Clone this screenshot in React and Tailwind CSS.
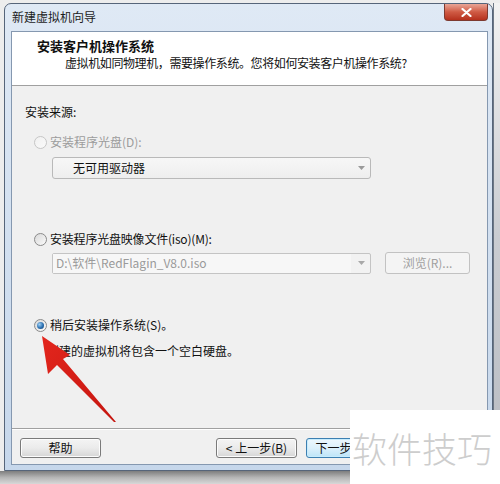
import React from "react";

function Radio({ checked = false, disabled = false }) {
  return (
    <span
      className={
        "relative inline-flex h-[13px] w-[13px] shrink-0 items-center justify-center rounded-full border " +
        (disabled
          ? "border-[#c6c6c6] bg-gradient-to-br from-[#f0f0f0] to-[#fafafa]"
          : "border-[#8a8a8a] bg-gradient-to-br from-[#d9d9d9] to-[#fbfbfb]")
      }
    >
      {checked && (
        <span className="h-[7px] w-[7px] rounded-full bg-[radial-gradient(circle_at_35%_35%,#9fd0f5,#2a6fb0_55%,#0f3e70)]" />
      )}
    </span>
  );
}

function Caret({ color = "#9a9a9a" }) {
  return (
    <svg width="7" height="4" viewBox="0 0 7 4" className="shrink-0">
      <path d="M0 0 H7 L3.5 4 Z" fill={color} />
    </svg>
  );
}

function Button({ children, primary = false }) {
  return (
    <div
      className={
        "flex h-[20px] w-[81px] items-center justify-center rounded-[3px] border text-[12px] leading-none text-[#111] " +
        (primary
          ? "border-[#3c7fb1] bg-gradient-to-b from-[#edf7fd] via-[#dcf0fb] to-[#bde4f8] shadow-[inset_0_0_0_1px_#c7ecfd]"
          : "border-[#7a7a7a] bg-gradient-to-b from-[#f4f4f4] via-[#ebebeb] to-[#d6d6d6] shadow-[inset_0_0_0_1px_#fcfcfc]")
      }
    >
      {children}
    </div>
  );
}

function Arrow() {
  return (
    <svg className="pointer-events-none absolute left-0 top-0" width="500" height="484" viewBox="0 0 500 484">
      <defs>
        <linearGradient id="ar" x1="0" y1="0" x2="1" y2="1">
          <stop offset="0" stopColor="#e3261d" />
          <stop offset="1" stopColor="#c5150f" />
        </linearGradient>
      </defs>
      <polygon
        points="42,336 70,355 63,359 116,422 114,422 57,365 48,374"
        fill="url(#ar)"
      />
    </svg>
  );
}

export default function App() {
  return (
    <div className="relative h-[484px] w-[500px] overflow-hidden bg-[#ededed] font-['Noto_Sans_CJK_SC','Liberation_Sans',sans-serif] text-[12px] text-[#111]">
      <div className="flex h-[471px] pl-[4px] pt-[3px]">
        {/* window */}
        <div className="flex w-[489px] flex-col rounded-t-[7px] border border-[#56657a] bg-gradient-to-b from-[#dfe9f5] to-[#c6d7eb]">
          <div className="flex h-[27px] items-start justify-between pl-[7px]">
            <span className="mt-[5px] leading-[16px] text-[#1c1c1c]">新建虚拟机向导</span>
            <div className="mr-[4px] flex h-[17px] w-[44px] items-center justify-center rounded-b-[4px] border border-t-0 border-[#7d3a30] bg-gradient-to-b from-[#e8a596] via-[#cf5a44] to-[#b5301c]">
              <svg width="11" height="9" viewBox="0 0 11 9">
                <path d="M1.5 1 L9.5 8 M9.5 1 L1.5 8" stroke="#fff" strokeWidth="2.2" strokeLinecap="round" />
              </svg>
            </div>
          </div>

          {/* client area */}
          <div className="ml-[6px] mr-[4px] flex h-[434px] flex-col border border-[#8598b0] bg-[#f0f0f0]">
            <div className="h-[54px] border-b border-[#a0a0a0] bg-white pt-[6px]">
              <div className="pl-[25px] text-[13px] font-bold leading-[16px]">安装客户机操作系统</div>
              <div className="mt-[1px] pl-[53px] leading-[16px] tracking-[-0.4px]">虚拟机如同物理机，需要操作系统。您将如何安装客户机操作系统?</div>
            </div>

            <div className="flex h-[343px] flex-col border-b border-[#a0a0a0] pl-[13px]">
              <div className="mt-[18px] leading-[16px]">安装来源:</div>

              <div className="ml-[9px] mt-[14px] flex h-[16px] items-center gap-[3px] text-[#9c9c9c]">
                <Radio disabled />
                <span className="leading-[16px]">安装程序光盘(D):</span>
              </div>
              <div className="ml-[27px] mt-[7px] flex h-[22px] w-[319px] items-center justify-between rounded-[3px] border border-[#b9b9b9] bg-gradient-to-b from-[#f7f7f7] to-[#eeeeee] pl-[20px] pr-[5px]">
                <span className="leading-[16px]">无可用驱动器</span>
                <Caret />
              </div>

              <div className="ml-[9px] mt-[52px] flex h-[16px] items-center gap-[3px]">
                <Radio />
                <span className="leading-[16px] tracking-[-0.2px]">安装程序光盘映像文件(iso)(M):</span>
              </div>
              <div className="ml-[27px] mt-[5px] flex h-[22px] items-center gap-[14px]">
                <div className="flex h-[21px] w-[319px] items-center justify-between rounded-[2px] border border-[#c4c4c4] bg-[#f2f2f2] pr-[5px]">
                  <span className="flex h-full w-[298px] items-center bg-[#f7f7f7] pl-[3px] leading-[16px] text-[#9a9a9a]">
                    {"D:\\软件\\RedFlagin_V8.0.iso"}
                  </span>
                  <Caret color="#a8a8a8" />
                </div>
                <div className="flex h-[22px] w-[85px] items-center justify-center rounded-[3px] border border-[#c2c2c2] bg-[#f4f4f4] text-[#a0a0a0]">
                  浏览(R)...
                </div>
              </div>

              <div className="ml-[9px] mt-[43px] flex h-[16px] items-center gap-[3px]">
                <Radio checked />
                <span className="leading-[16px]">稍后安装操作系统(S)。</span>
              </div>
              <div className="ml-[22px] mt-[10px] leading-[16px]">创建的虚拟机将包含一个空白硬盘。</div>
            </div>

            <div className="flex flex-1 items-start justify-between border-t border-white pl-[8px] pr-[10px] pt-[8px]">
              <Button>帮助</Button>
              <div className="flex gap-[9px]">
                <Button>&lt; 上一步(B)</Button>
                <Button primary>下一步(N) &gt;</Button>
                <Button>取消</Button>
              </div>
            </div>
          </div>
        </div>

        {/* background app peeking at the right */}
        <div className="flex-1 border-l border-[#6c7785] bg-gradient-to-b from-[#f2f2f2] via-[#c9ccd1] to-[#b9bcc2]" />
      </div>
      <div className="h-[13px] bg-gradient-to-b from-[#7e7e7e] via-[#b5b5b5] to-[#d8d8d8]" />

      <Arrow />

      <div className="absolute left-[350px] top-[410px] flex h-[74px] w-[150px] items-center bg-white pl-[2px]">
        <span className="whitespace-nowrap text-[35px] font-light leading-none text-[#cdcdcd]">软件技巧</span>
      </div>
    </div>
  );
}
